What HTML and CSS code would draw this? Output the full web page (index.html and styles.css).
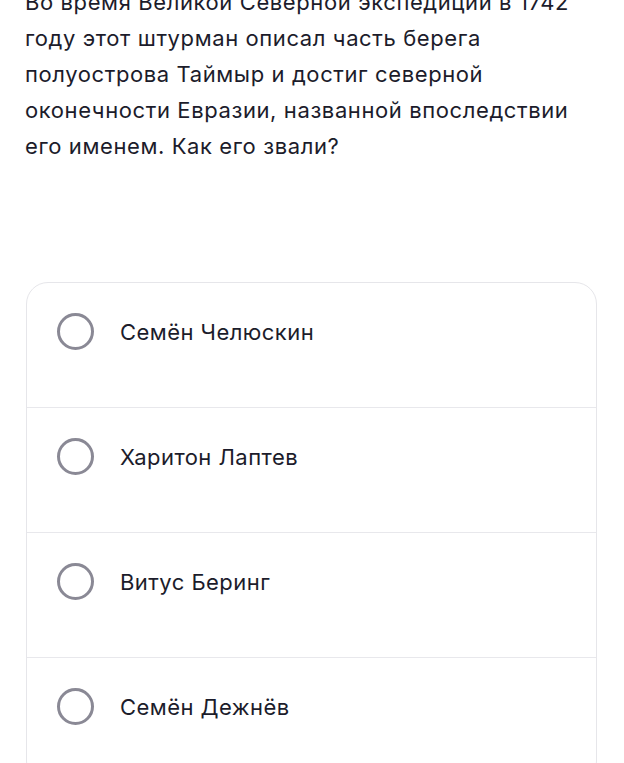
FILE: index.html
```html
<!DOCTYPE html>
<html lang="ru">
<head>
<meta charset="utf-8">
<link rel="stylesheet" href="styles.css">
</head>
<body>
<main class="page">
  <p class="question">Во время Великой Северной экспедиции в 1742 году этот штурман описал часть берега полуострова Таймыр и достиг северной оконечности Евразии, названной впоследствии его именем. Как его звали?</p>
  <ul class="options">
    <li class="option"><span class="radio"></span><span class="label">Семён Челюскин</span></li>
    <li class="option"><span class="radio"></span><span class="label">Харитон Лаптев</span></li>
    <li class="option"><span class="radio"></span><span class="label">Витус Беринг</span></li>
    <li class="option"><span class="radio"></span><span class="label">Семён Дежнёв</span></li>
  </ul>
</main>
</body>
</html>
```
FILE: styles.css
```css
* { box-sizing: border-box; }
html, body { margin: 0; padding: 0; background: #fff; }
body {
  font-family: Inter, "Noto Sans", sans-serif;
  color: #1c1c2b;
  overflow: hidden;
}
.page {
  padding: 0 27px 0 25px;
  margin-top: -16px;
}
.question {
  margin: 0;
  font-size: 22px;
  line-height: 36px;
  letter-spacing: 0.6px;
  width: 565px;
}
.options {
  list-style: none;
  margin: 118px 0 0 1px;
  padding: 0;
  border: 1.5px solid #e6e6ea;
  border-radius: 22px;
  overflow: hidden;
}
.option {
  display: flex;
  align-items: center;
  gap: 26px;
  height: 125px;
  padding: 0 30px 27px 30px;
  border-top: 1.5px solid #e8e8ec;
}
.option:first-child { height: 124px; border-top: none; }
.radio {
  width: 37px;
  height: 37px;
  border: 3px solid #8a8995;
  border-radius: 50%;
  flex: none;
}
.label {
  font-size: 22px;
  letter-spacing: 0.45px;
  color: #1c1c2b;
}
```
